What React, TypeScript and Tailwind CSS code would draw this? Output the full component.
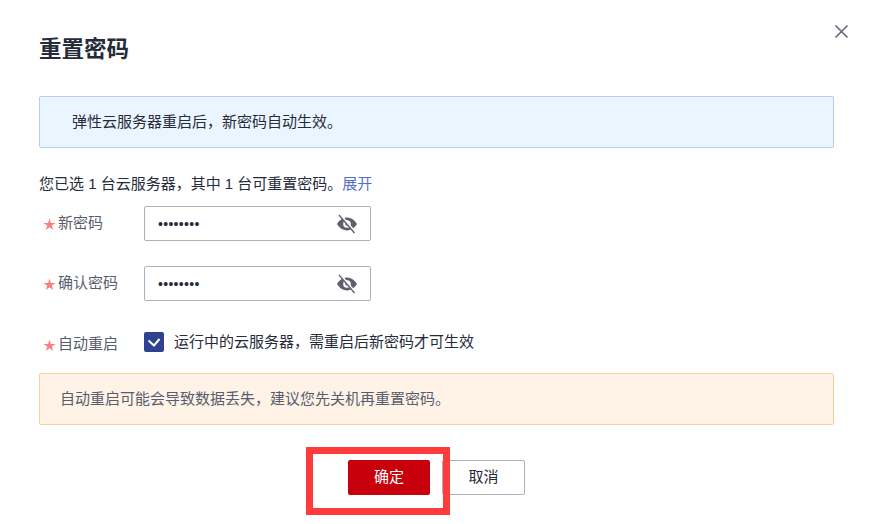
const font = { fontFamily: '"Liberation Sans", "Noto Sans CJK SC", sans-serif' }

const EyeOff = () => (
  <svg width="22" height="20" viewBox="0 0 22 20" className="shrink-0">
    <path
      fillRule="evenodd"
      d="M11 3.600c4.600 0 8 3.200 10 6.400-2 3.200-5.400 6.400-10 6.400S3 13.200 1 10c2-3.200 5.400-6.400 10-6.400zM11 6.200a3.800 3.800 0 1 0 0 7.600 3.800 3.800 0 0 0 0-7.600z"
      fill="#5e6070"
    />
    <circle cx="11" cy="10" r="1.800" fill="#5e6070" />
    <path d="M3.800 0.600 19 18.400" stroke="#ffffff" strokeWidth="2.600" />
    <path d="M3 1 18.500 19" stroke="#5e6070" strokeWidth="1.300" />
  </svg>
)

const Label = ({ text }: { text: string }) => (
  <div className="w-[105px] pl-[4px] flex items-center text-[15px] text-[#575d6c]">
    <svg width="13" height="13" viewBox="0 0 13 13" className="mr-[2px] shrink-0 translate-y-[1px]">
      <path d="M6.500 0.500 7.900 4.900 12.500 4.900 8.800 7.600 10.200 12 6.500 9.300 2.800 12 4.200 7.600 0.500 4.900 5.100 4.900Z" fill="#fa7f7f" />
    </svg>
    <span>{text}</span>
  </div>
)

const PasswordField = ({ label }: { label: string }) => (
  <div className="flex items-center h-[35px]">
    <Label text={label} />
    <div className="w-[227px] h-[35px] flex items-center justify-between pl-[13px] pr-[12px] border border-[#adb0b8] rounded-[2px] bg-white">
      <span className="text-[#252b3a] text-[14px] tracking-[0.3px] leading-none" style={{ fontFamily: '"Liberation Sans", sans-serif' }}>
        ••••••••
      </span>
      <EyeOff />
    </div>
  </div>
)

export default function App() {
  return (
    <div className="relative w-[869px] h-[524px] bg-white overflow-hidden px-[39px] pt-[35px]" style={font}>
      <button className="absolute right-[20px] top-[24px] text-[#575d6c]">
        <svg width="15" height="15" viewBox="0 0 15 15">
          <path d="M1.500 1.500 13.500 13.500M13.500 1.500 1.500 13.500" stroke="#5e6372" strokeWidth="1.500" fill="none" />
        </svg>
      </button>

      <h1 className="text-[22.500px] leading-[30px] font-bold text-[#252b3a]">重置密码</h1>

      <div className="mt-[31px] w-[795px] h-[52px] pl-[32px] flex items-center bg-[#ebf5ff] border border-[#b8cdf5] rounded-[2px] text-[15px] text-[#252b3a]">
        弹性云服务器重启后，新密码自动生效。
      </div>

      <p className="mt-[26px] text-[15px] leading-[20px] text-[#252b3a]">
        您已选 1 台云服务器，其中 1 台可重置密码。<span className="text-[#526ecc]">展开</span>
      </p>

      <div className="mt-[12px] flex flex-col gap-[25px]">
        <PasswordField label="新密码" />
        <PasswordField label="确认密码" />
      </div>

      <div className="mt-[31px] flex items-center h-[20px]">
        <div className="translate-y-[2px]">
          <Label text="自动重启" />
        </div>
        <div className="w-[20px] h-[20px] rounded-[2px] bg-[#2f4291] flex items-center justify-center">
          <svg width="14" height="12" viewBox="0 0 14 12">
            <path d="M1.500 4.500 7 9.500 12.500 3" stroke="#ffffff" strokeWidth="2" fill="none" />
          </svg>
        </div>
        <span className="ml-[10px] text-[15px] text-[#252b3a]">运行中的云服务器，需重启后新密码才可生效</span>
      </div>

      <div className="mt-[21px] w-[795px] h-[52px] pl-[20px] flex items-center bg-[#fff3e8] border border-[#fccf9f] rounded-[2px] text-[15px] text-[#575d6c]">
        自动重启可能会导致数据丢失，建议您先关机再重置密码。
      </div>

      <div className="mt-[35px] flex justify-center gap-[12px] pl-[4px]">
        <button className="w-[82px] h-[35px] rounded-[2px] bg-[#c7000b] text-white text-[15px]">确定</button>
        <button className="w-[83px] h-[35px] rounded-[2px] bg-white border border-[#adb0b8] text-[#252b3a] text-[15px]">取消</button>
      </div>

      <div className="absolute left-[306px] top-[447px] w-[144px] h-[68px] border-[7px] border-[#ff3b3b]" />
    </div>
  )
}
